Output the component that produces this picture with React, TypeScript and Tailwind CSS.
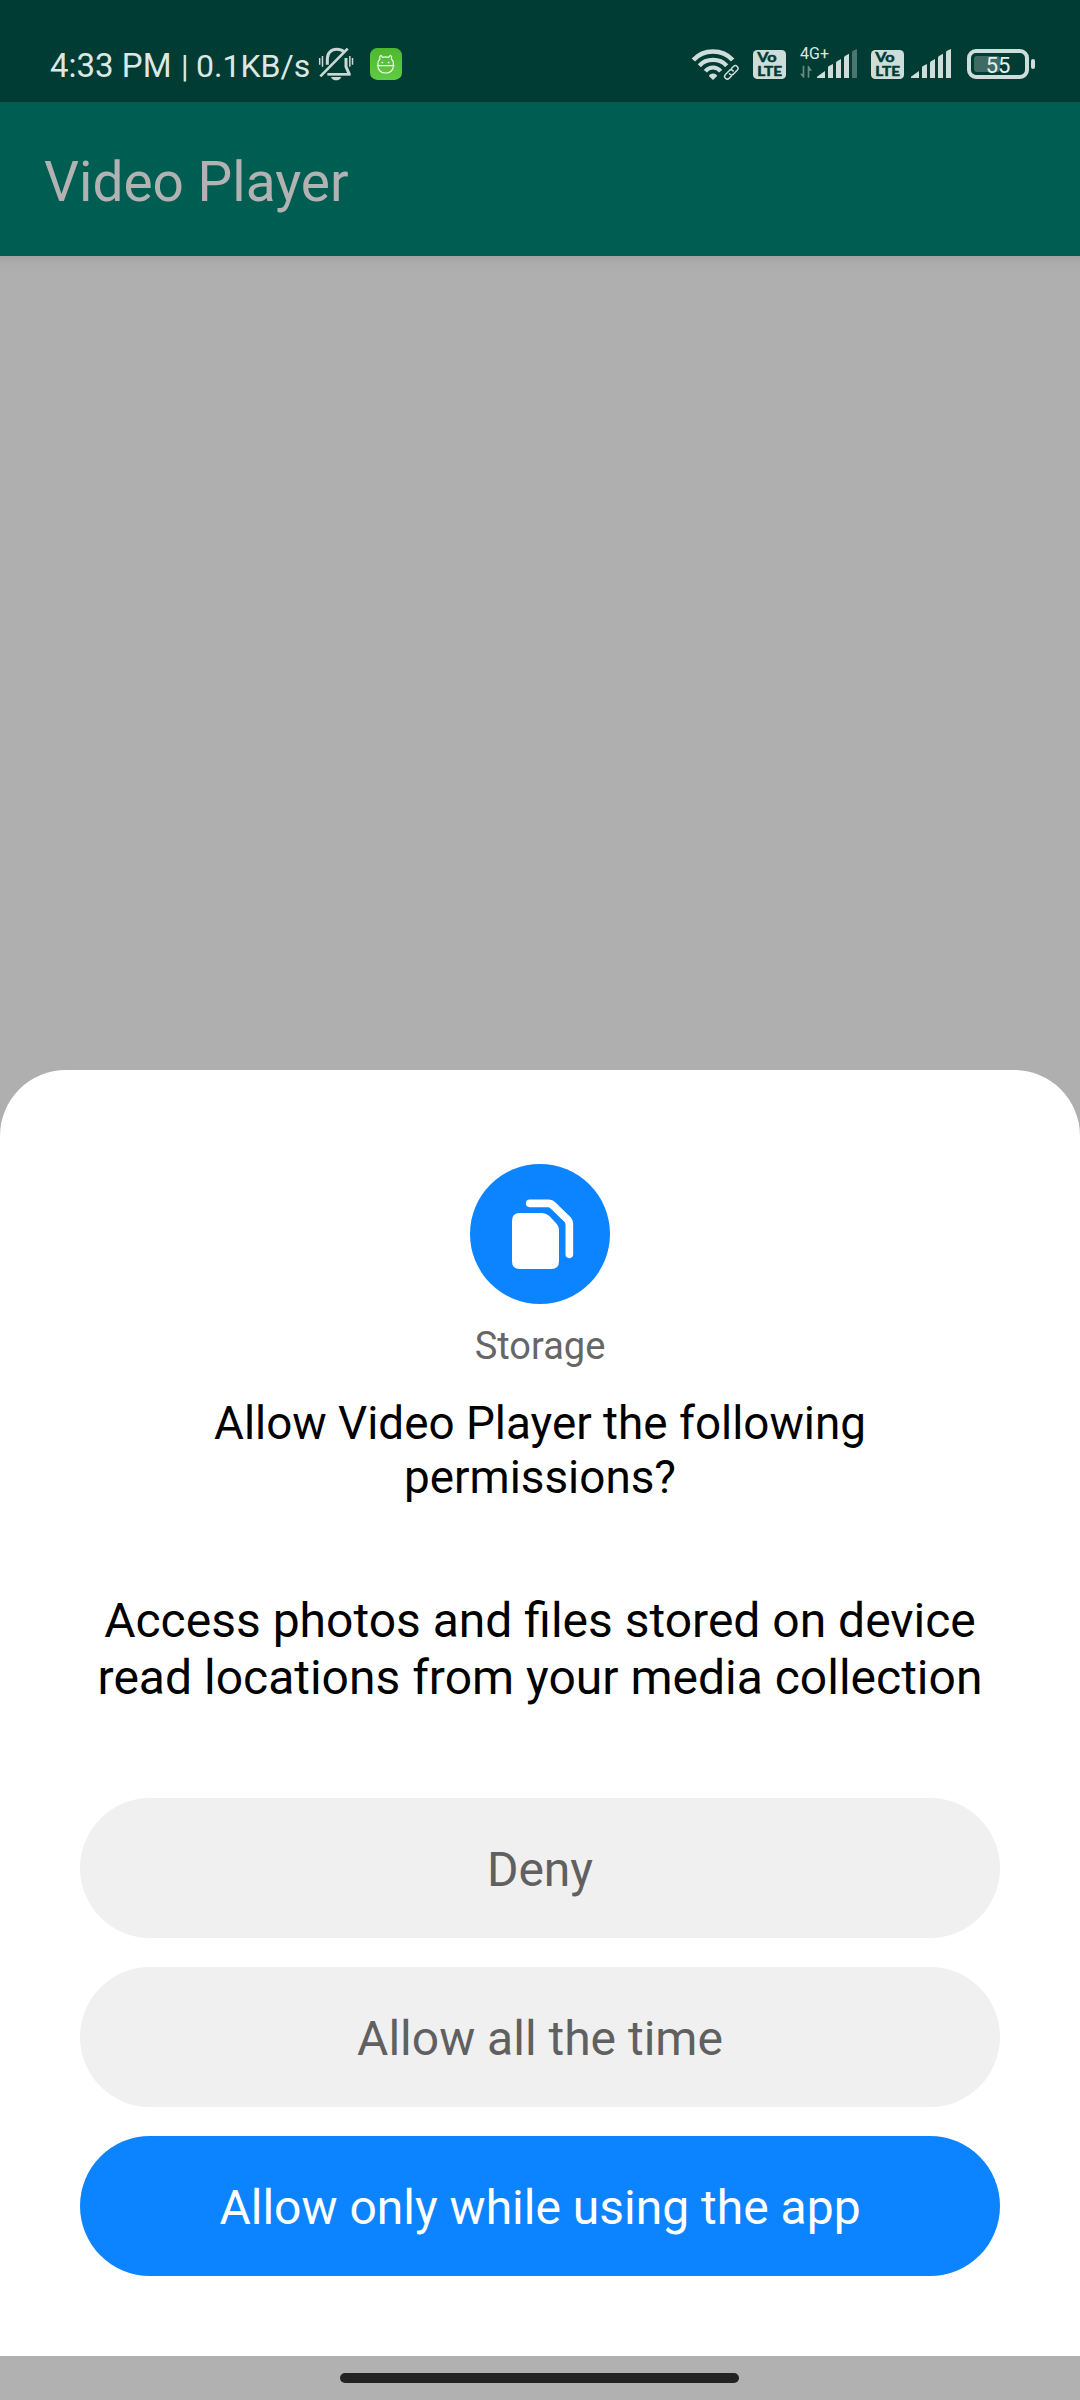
function MutedBell() {
  return (
    <svg className="ml-2 mt-[47px] h-[35px] w-9 shrink-0" viewBox="864 51 108 105" fill="none" stroke="#c9d8d5">
      <path d="M892 104V86C892 70 903 58 920 58C929 58 936 60 941 65" strokeWidth="9" />
      <path d="M948 84V110L957 131" strokeWidth="9" strokeLinejoin="round" />
      <path d="M892 133H962" strokeWidth="8" />
      <path d="M871 139L953 56" strokeWidth="8" />
      <path d="M903 141H934C931 148 926 151 918.500 151C911 151 906 148 903 141Z" fill="#c9d8d5" stroke="none" />
      <path d="M869 84V104M877.500 78V110M959.500 78V110M967.500 84V104" strokeWidth="4.500" />
    </svg>
  );
}

function GreenApp() {
  return (
    <svg className="ml-4 mt-12 h-8 w-8 shrink-0" viewBox="0 0 96 96" fill="none">
      <defs>
        <linearGradient id="app" x1="0" y1="0" x2="0" y2="1">
          <stop offset="0" stopColor="#4db82f" />
          <stop offset="1" stopColor="#60cc44" />
        </linearGradient>
      </defs>
      <rect width="96" height="96" rx="22" fill="url(#app)" />
      <g stroke="#effbe9" strokeWidth="3.500" strokeLinejoin="round" strokeLinecap="round">
        <path d="M24 51C23 42 26 36 30 33L29 26L33 22L38 28Q47 25 56 28L61 22L65 26L64 33C69 37 71 43 70 51" />
        <path d="M22 53H72M24 53C23 66 33 75 47 75C61 75 71 66 70 53" />
      </g>
      <path d="M37 41V46M56 41V46" stroke="#effbe9" strokeWidth="5" />
    </svg>
  );
}

function Wifi() {
  return (
    <svg className="mt-12 h-[33px] w-[49px] shrink-0" viewBox="33 54 147 99" fill="none" stroke="#cfddda">
      <path d="M40 90C71 56 127 56 158 90" strokeWidth="14" />
      <path d="M58 107C79 84 119 84 140 107" strokeWidth="13" />
      <path d="M76 124C88 109 110 109 122 124" strokeWidth="12" />
      <path d="M99 150L87 139C87 128 111 128 111 139Z" fill="#cfddda" stroke="none" />
      <g transform="translate(154 127) rotate(-45)">
        <rect x="-31" y="-13" width="62" height="26" rx="13" fill="#003c33" stroke="none" />
        <path d="M1 -8H-17A8 8 0 0 0 -17 8H-8M-1 8H17A8 8 0 0 0 17 -8H8" strokeWidth="4.500" strokeLinecap="round" />
        <path d="M1 -8Q7 -7 7 1M-1 8Q-7 7 -7 -1" strokeWidth="4.500" strokeLinecap="round" />
      </g>
    </svg>
  );
}

function VoLte() {
  return (
    <svg className="mt-[50px] h-[29px] w-[33px] shrink-0" viewBox="0 0 99 87">
      <rect width="99" height="87" rx="13" fill="#cfddda" />
      <g
        fill="#003c33"
        stroke="#003c33"
        strokeWidth="1.500"
        strokeLinejoin="round"
        fontFamily="Lato, Roboto, sans-serif"
        fontWeight="700"
      >
        <text x="13" y="36" fontSize="37" textLength="58" lengthAdjust="spacingAndGlyphs">Vo</text>
        <text x="13" y="77" fontSize="39" textLength="74" lengthAdjust="spacingAndGlyphs">LTE</text>
      </g>
    </svg>
  );
}

function Bars({ dimLast = false }: { dimLast?: boolean }) {
  return (
    <svg className="h-[29px] w-10 shrink-0" viewBox="0 0 120 87" fill="#cfddda">
      <path d="M0 87V83L24 66V87Z" />
      <path d="M33 87V56Q33 52 36 51L48 45V87Z" />
      <path d="M57 87V43Q57 39 60 37L72 30V87Z" />
      <path d="M81 87V27Q81 23 84 21L96 14V87Z" />
      <path d="M105 87V11Q105 7 108 5L120 0V87Z" fill={dimLast ? "#4b766f" : "#cfddda"} />
    </svg>
  );
}

function Traffic() {
  return (
    <svg className="h-[13px] w-3 shrink-0" viewBox="361 105 36 39" fill="#668a84">
      <path d="M369 107H374V143H371L361 131H369Z" />
      <path d="M389 143H384V107H387L397 122H389Z" />
    </svg>
  );
}

function Battery() {
  return (
    <div className="ml-4 mt-[49px] flex items-center">
      <div className="relative flex h-[30px] w-[62px] items-center justify-center rounded-[9px] border-4 border-[#cfddda]">
        <div className="absolute left-[3px] top-[3px] h-4 w-[26px] rounded-[3px] bg-[#3f6b64]" />
        <span className="relative pt-0.5 text-[22px] leading-[25px] text-[#e6f1ee]">55</span>
      </div>
      <div className="ml-0.5 h-2.5 w-1 rounded-full bg-[#cfddda]" />
    </div>
  );
}

function StatusBar() {
  return (
    <header className="flex h-[102px] items-start bg-[#003c33] pl-[50px] text-[#dce8e5]">
      <span className="mt-[46px] w-[131px] whitespace-nowrap text-[33px] leading-[39px]">4:33 PM</span>
      <span className="mt-12 w-[15px] text-[31px] leading-[37px]">|</span>
      <span className="mt-12 w-[114px] whitespace-nowrap text-[32px] leading-[37px]">0.1KB/s</span>
      <MutedBell />
      <GreenApp />
      <div className="ml-[289px] flex items-start">
        <Wifi />
        <div className="ml-[13px]">
          <VoLte />
        </div>
        <div className="relative ml-3.5 mt-[65px] flex h-[13px] items-end gap-[5px]">
          <span className="absolute -top-[21px] left-0 text-[16px] leading-[19px]">4G+</span>
          <Traffic />
          <Bars dimLast />
        </div>
        <div className="ml-3.5">
          <VoLte />
        </div>
        <div className="ml-[7px] mt-[49px]">
          <Bars />
        </div>
        <Battery />
      </div>
    </header>
  );
}

function StorageIcon() {
  return (
    <div className="h-[140px] w-[140px] rounded-full bg-[#0d84ff]">
      <svg className="h-full w-full" viewBox="90 72 420 420" fill="none">
        <path
          d="M239 219H305Q318 219 328 228L347 248Q357 258 357 271V364Q357 387 334 387H239Q216 387 216 364V242Q216 219 239 219Z"
          fill="#fff"
        />
        <path
          d="M269 190H324Q333 190 340 197L380 236Q388 243 388 253V343"
          stroke="#fff"
          strokeWidth="23"
          strokeLinecap="round"
        />
      </svg>
    </div>
  );
}

function PermissionSheet() {
  const button = "flex h-[140px] w-full items-center justify-center rounded-full pt-[3px] text-[48px] leading-[57px]";
  return (
    <section className="flex h-[1286px] flex-col items-center rounded-t-[66px] bg-white px-20 pt-[94px] text-center text-black">
      <StorageIcon />
      <p className="mt-5 text-[38px] leading-[44px] text-[#666666]">Storage</p>
      <h2 className="mt-[29px] text-[45.800px] leading-[54px]">
        Allow Video Player the following
        <br />
        permissions?
      </h2>
      <p className="mt-[87px] whitespace-nowrap text-[48px] leading-[57px]">
        Access photos and files stored on device
        <br />
        read locations from your media collection
      </p>
      <div className="mt-[92px] flex w-full flex-col gap-[29px]">
        <button className={`${button} bg-[#f0f0f0] text-[#606060]`}>Deny</button>
        <button className={`${button} bg-[#f0f0f0] text-[#606060]`}>Allow all the time</button>
        <button className={`${button} bg-[#0d84ff] text-white`}>Allow only while using the app</button>
      </div>
    </section>
  );
}

export default function App() {
  return (
    <div className="flex h-[2400px] w-[1080px] flex-col overflow-hidden bg-[#afafaf] font-[Roboto,sans-serif]">
      <StatusBar />
      <div className="flex h-[154px] items-center bg-[#005d52] pl-11 pt-1.5">
        <h1 className="text-[55px] leading-[64px] text-[#b2b2b2]">Video Player</h1>
      </div>
      <main className="flex flex-1 flex-col justify-between">
        <div className="h-4 bg-linear-to-b from-[#a2a2a2] via-[#acacac] to-[#afafaf]" />
        <PermissionSheet />
      </main>
      <footer className="flex h-11 items-center bg-[#b1b1b1] pl-[340px]">
        <div className="h-2.5 w-[399px] rounded-full bg-[#232323]" />
      </footer>
    </div>
  );
}
